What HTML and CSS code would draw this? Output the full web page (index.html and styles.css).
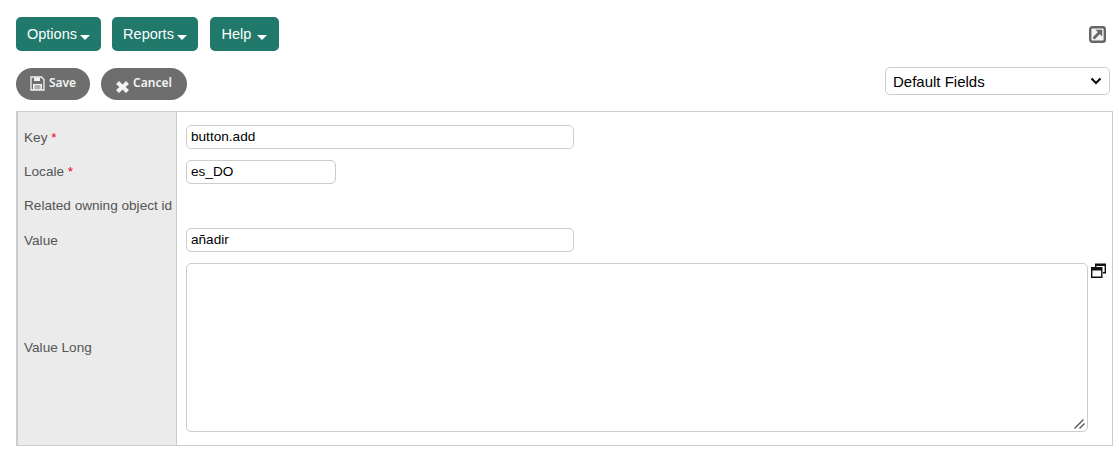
FILE: index.html
```html
<!DOCTYPE html>
<html lang="en">
<head>
    <meta charset="UTF-8">
    <meta name="viewport" content="width=device-width, initial-scale=1.0">
    <title>Edit Label</title>
    <link rel="stylesheet" href="styles.css">
</head>
<body>

    <!-- Top menu -->
    <div class="menu-bar">
        <div class="menu-buttons">
            <button class="menu-button menu-options">Options<span class="caret"></span></button>
            <button class="menu-button menu-reports">Reports<span class="caret"></span></button>
            <button class="menu-button menu-help">Help <span class="caret caret-help"></span></button>
        </div>
        <svg class="popout-icon" width="17" height="17" viewBox="0 0 17 17" aria-hidden="true">
            <rect x="1.2" y="1.2" width="14.6" height="14.6" rx="2" fill="#f2f2f2" stroke="#666" stroke-width="2.4"/>
            <path d="M6.5 3.8h6.7v6.7z" fill="#666"/>
            <path d="M4.6 12.4 10.4 6.6" fill="none" stroke="#666" stroke-width="2.8"/>
        </svg>
    </div>

    <!-- Actions -->
    <div class="action-bar">
        <div class="action-buttons">
            <button class="action-button action-save">
                <svg class="save-icon" width="15" height="15" viewBox="0 0 15 15" aria-hidden="true">
                    <path d="M1 1h10.5L14 3.5V14H1z" fill="none" stroke="#f2f2f2" stroke-width="1.3"/>
                    <path d="M4 1.5h6v3.5H4z" fill="#f2f2f2"/>
                    <path d="M3 8h9v5.5H3z" fill="#f2f2f2"/>
                    <path d="M4.5 9.5h6v1h-6zM4.5 11.5h6v1h-6z" fill="#6e6e6e"/>
                </svg>
                <span class="action-label">Save</span>
            </button>
            <button class="action-button action-cancel">
                <svg class="cancel-icon" width="13" height="12" viewBox="0 0 13 12" aria-hidden="true">
                    <path d="M3 0 6.5 3.4 10 0 13 3 9.6 6 13 9 10 12 6.5 8.6 3 12 0 9 3.4 6 0 3z" fill="#f2f2f2"/>
                </svg>
                <span class="action-label">Cancel</span>
            </button>
        </div>
        <select class="field-select">
            <option>Default Fields</option>
        </select>
    </div>

    <!-- Edit form -->
    <table class="edit-table">
        <tr class="first-row">
            <td class="label-cell">Key <span class="required">*</span></td>
            <td class="value-cell"><input type="text" class="input-long" value="button.add"></td>
        </tr>
        <tr>
            <td class="label-cell">Locale <span class="required">*</span></td>
            <td class="value-cell"><input type="text" class="input-short" value="es_DO"></td>
        </tr>
        <tr class="related-row">
            <td class="label-cell">Related owning object id</td>
            <td class="value-cell"></td>
        </tr>
        <tr class="value-row">
            <td class="label-cell">Value</td>
            <td class="value-cell"><input type="text" class="input-long" value="añadir"></td>
        </tr>
        <tr class="last-row">
            <td class="label-cell">Value Long</td>
            <td class="value-cell">
                <div class="textarea-wrap">
                    <div class="textarea-box">
                        <textarea class="value-long"></textarea>
                        <svg class="resize-grip" width="11" height="10" viewBox="0 0 11 10" aria-hidden="true">
                            <path d="M0.5 9.5 9.5 0.5M5.5 9.5 10.5 4.5" fill="none" stroke="#555" stroke-width="1.4"/>
                        </svg>
                    </div>
                    <svg class="expand-icon" width="15" height="15" viewBox="0 0 15 15" aria-hidden="true">
                        <path d="M4 0.5h11v2.5H4zM4 2h1.4v2H4zM13.6 2H15v8.5h-3V9h1.6z" fill="#111"/>
                        <path d="M0 4h11.5v11H0zM1.4 7.5v6h8.7v-6z" fill="#111" fill-rule="evenodd"/>
                    </svg>
                </div>
            </td>
        </tr>
    </table>

</body>
</html>
```

FILE: styles.css
```css
/* General styles */
body {
    margin: 0;
    padding: 17px 6px 0 16px;
    font-family: "Liberation Sans", Arial, sans-serif;
    font-size: 14px;
    color: #000;
    background-color: #fff;
}

button {
    font-family: inherit;
    border: none;
    cursor: pointer;
}

/* Top menu */
.menu-bar {
    display: flex;
    justify-content: space-between;
    align-items: center;
    height: 34px;
    padding-right: 7px;
}

.menu-buttons {
    display: flex;
    gap: 11px;
}

.menu-button {
    height: 34px;
    padding: 0;
    border-radius: 5px;
    background-color: #20796b;
    color: #fff;
    font-size: 14.5px;
    text-align: center;
}

.menu-options {
    width: 85px;
}

.menu-reports {
    width: 86px;
}

.menu-help {
    width: 69px;
    margin-left: 1px;
}

.caret {
    display: inline-block;
    margin-left: 3px;
    vertical-align: -1px;
    border-top: 5px solid #fff;
    border-left: 5px solid transparent;
    border-right: 5px solid transparent;
}

.caret-help {
    margin-left: 2px;
}

.popout-icon {
    display: block;
}

/* Save and cancel row */
.action-bar {
    display: flex;
    justify-content: space-between;
    align-items: flex-start;
    height: 32px;
    margin-top: 17px;
    margin-right: 3px;
}

.action-buttons {
    display: flex;
    gap: 11px;
}

.action-button {
    display: flex;
    align-items: center;
    justify-content: center;
    gap: 4px;
    height: 32px;
    padding: 0;
    border-radius: 16px;
    background-color: #6e6e6e;
    color: #f4f4f4;
    font-family: "Noto Sans", sans-serif;
    font-size: 12px;
    font-weight: 600;
}

.action-label {
    padding-bottom: 4px;
}

.save-icon {
    margin-bottom: 1px;
}

.cancel-icon {
    margin-top: 5px;
}

.action-save {
    width: 74px;
}

.action-cancel {
    width: 86px;
}

.field-select {
    width: 225px;
    height: 28px;
    margin-top: -1px;
    padding: 0 7px;
    border: 1px solid #ccc;
    border-radius: 5px;
    appearance: none;
    background: #fff url("data:image/svg+xml,%3Csvg xmlns='http://www.w3.org/2000/svg' width='12' height='8'%3E%3Cpath d='M1.5 1.5 6 6l4.5-4.5' fill='none' stroke='%23000' stroke-width='2'/%3E%3C/svg%3E") no-repeat right 7px center;
    font-family: inherit;
    font-size: 15px;
    color: #000;
}

/* Edit form */
.edit-table {
    width: 1097px;
    margin-top: 11px;
    border-collapse: separate;
    border-spacing: 0;
    border: 1px solid #ccc;
    border-left-width: 2px;
}

.edit-table td {
    padding: 0;
}

.edit-table .label-cell {
    width: 152px;
    padding-left: 6px;
    border-right: 1px solid #ccc;
    background-color: #ebebeb;
    color: #555;
    font-size: 13.6px;
    white-space: nowrap;
    vertical-align: middle;
}

.edit-table .first-row .label-cell {
    padding-top: 8px;
}

.edit-table .value-row .label-cell {
    padding-top: 1px;
}

.edit-table .last-row .label-cell {
    padding-bottom: 8px;
}

.required {
    color: #e3001b;
}

.edit-table .value-cell {
    padding: 6px 0 5px 9px;
    vertical-align: top;
}

.edit-table .first-row .value-cell {
    padding-top: 13px;
}

.edit-table .last-row .value-cell {
    padding-bottom: 13px;
}

.related-row {
    height: 33px;
}

.value-cell input {
    display: block;
    box-sizing: border-box;
    height: 24px;
    padding: 0 4px 1px;
    border: 1px solid #ccc;
    border-radius: 5px;
    font-family: inherit;
    font-size: 13.6px;
    color: #000;
}

.input-long {
    width: 388px;
}

.input-short {
    width: 150px;
}

.textarea-wrap {
    display: flex;
    align-items: flex-start;
    gap: 3px;
}

.textarea-box {
    position: relative;
}

.value-long {
    display: block;
    box-sizing: border-box;
    width: 902px;
    height: 169px;
    padding: 4px;
    border: 1px solid #ccc;
    border-radius: 5px;
    resize: none;
}

.resize-grip {
    position: absolute;
    right: 3px;
    bottom: 3px;
}

.expand-icon {
    display: block;
}
```
